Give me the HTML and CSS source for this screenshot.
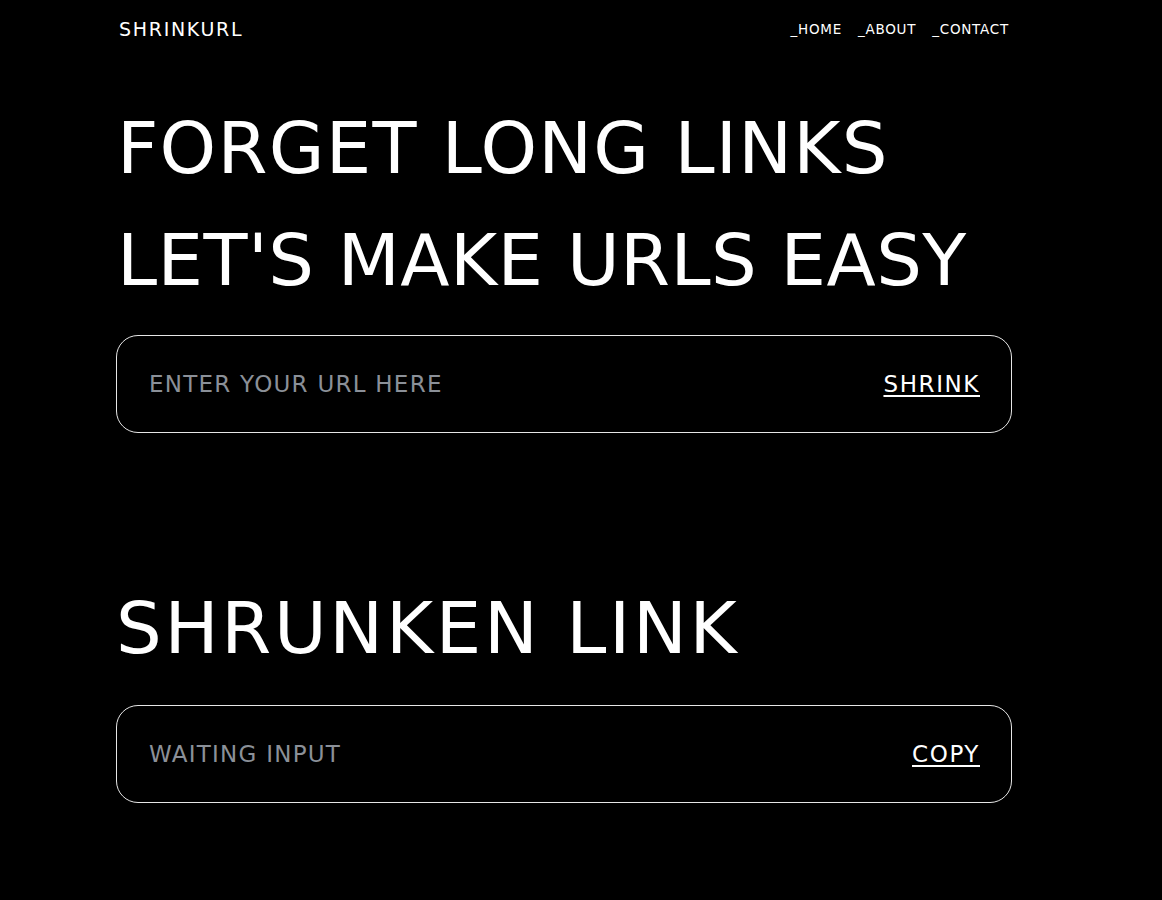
FILE: index.html
```html
<!DOCTYPE html>
<html lang="en">
<head>
<meta charset="utf-8">
<title>ShrinkURL</title>
<link rel="stylesheet" href="styles.css">
</head>
<body>
<div class="page">
  <header class="nav">
    <div class="logo">SHRINKURL</div>
    <nav class="links">
      <a href="#" class="link">_HOME</a>
      <a href="#" class="link">_ABOUT</a>
      <a href="#" class="link">_CONTACT</a>
    </nav>
  </header>
  <main>
    <h1 class="headline"><span class="line line-one">FORGET LONG LINKS</span><span class="line line-two">LET'S MAKE URLS EASY</span></h1>
    <form class="field" onsubmit="return false">
      <input class="field-input" type="text" placeholder="ENTER YOUR URL HERE">
      <button class="field-action" type="button">SHRINK</button>
    </form>
    <h2 class="result-title">SHRUNKEN LINK</h2>
    <div class="field result-field">
      <input class="field-input" type="text" placeholder="WAITING INPUT" readonly>
      <button class="field-action" type="button">COPY</button>
    </div>
  </main>
</div>
</body>
</html>
```
FILE: styles.css
```css
html, body {
  margin: 0;
  padding: 0;
  background: #000;
  color: #fff;
  font-family: "DejaVu Sans", "Liberation Sans", sans-serif;
}

.page {
  margin-left: 116px;
  width: 896px;
}

.nav {
  height: 58px;
  display: flex;
  align-items: center;
  justify-content: space-between;
  padding: 0 3px 0 3px;
}

.logo {
  font-size: 19px;
  line-height: 24px;
  letter-spacing: 1.7px;
}

.links {
  display: flex;
  gap: 16px;
}

.link {
  color: #fff;
  text-decoration: none;
  font-size: 13.5px;
  line-height: 18px;
  letter-spacing: 0.75px;
}

.headline {
  margin: 34px 0 0 0;
  font-size: 72px;
  line-height: 112px;
  font-weight: normal;
  padding-left: 1px;
}

.line {
  display: block;
}

.line-one {
  letter-spacing: 1.2px;
}

.line-two {
  letter-spacing: 0.45px;
}

.field {
  box-sizing: border-box;
  height: 98px;
  margin-top: 19px;
  border: 1px solid #e6e6e6;
  border-radius: 22px;
  display: flex;
  align-items: center;
  padding: 0 31px 0 32px;
}

.field-input {
  flex: 1;
  min-width: 0;
  background: transparent;
  border: none;
  outline: none;
  color: #fff;
  font-family: inherit;
  font-size: 23px;
  letter-spacing: 1.25px;
  padding: 0;
}

.field-input::placeholder {
  color: #8b9098;
  opacity: 1;
}

.field-action {
  background: transparent;
  border: none;
  padding: 0;
  color: #fff;
  font-family: inherit;
  font-size: 23px;
  letter-spacing: 1.6px;
  text-decoration: underline;
  text-underline-offset: 3px;
  cursor: pointer;
}

.result-title {
  margin: 139px 0 0 0;
  font-size: 72px;
  line-height: 112px;
  font-weight: normal;
  letter-spacing: 2.7px;
}

.result-field {
  margin-top: 21px;
}
```
